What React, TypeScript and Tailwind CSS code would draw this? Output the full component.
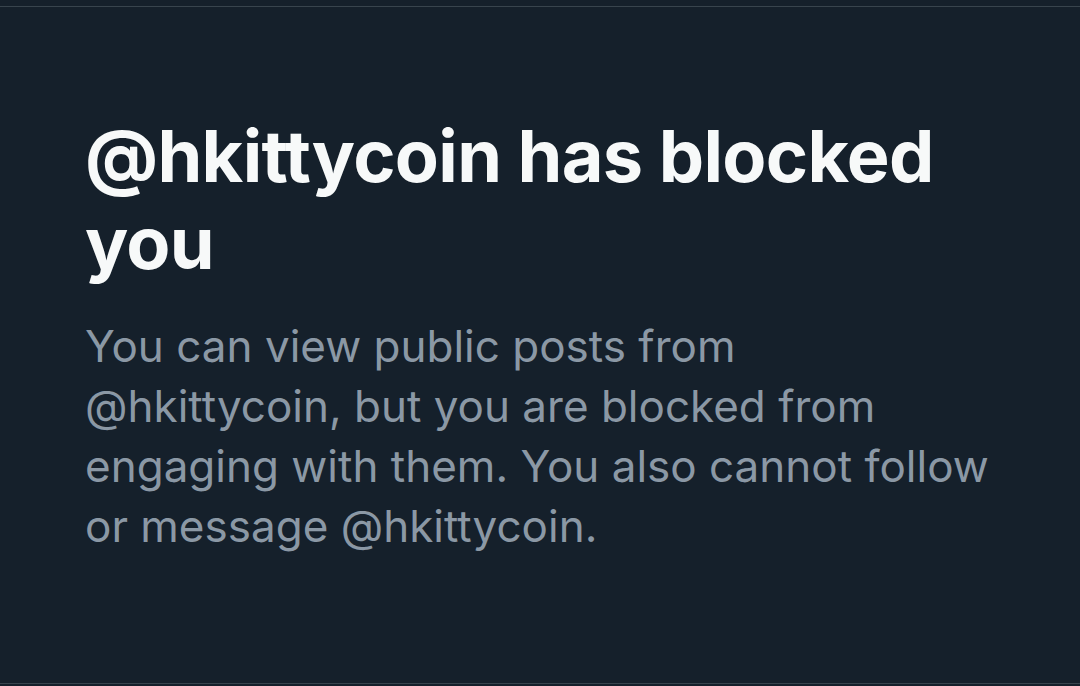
import React from 'react';

const handle = '@hkittycoin';

const BlockedNotice: React.FC = () => {
  return (
    <div className="pl-[85px] pt-[105px] w-[1020px]">
      <h1 className="text-[72px] leading-[87px] font-bold text-[#f7f9f9] tracking-[-0.7px]">
        {handle} has blocked
        <br />
        you
      </h1>
      <p className="mt-[30px] text-[44px] leading-[60px] text-[#8b98a5]">
        You can view public posts from
        <br />
        {handle}, but you are blocked from
        <br />
        engaging with them. You also cannot follow
        <br />
        or message {handle}.
      </p>
    </div>
  );
};

export default function App() {
  return (
    <div className="w-[1080px] h-[686px] bg-[#15202b] pt-[6px] pb-[2px] flex flex-col" style={{ fontFamily: 'Inter, "Noto Sans", sans-serif' }}>
      <div className="flex-1 border-t border-b border-[#38444d]">
        <BlockedNotice />
      </div>
    </div>
  );
}
